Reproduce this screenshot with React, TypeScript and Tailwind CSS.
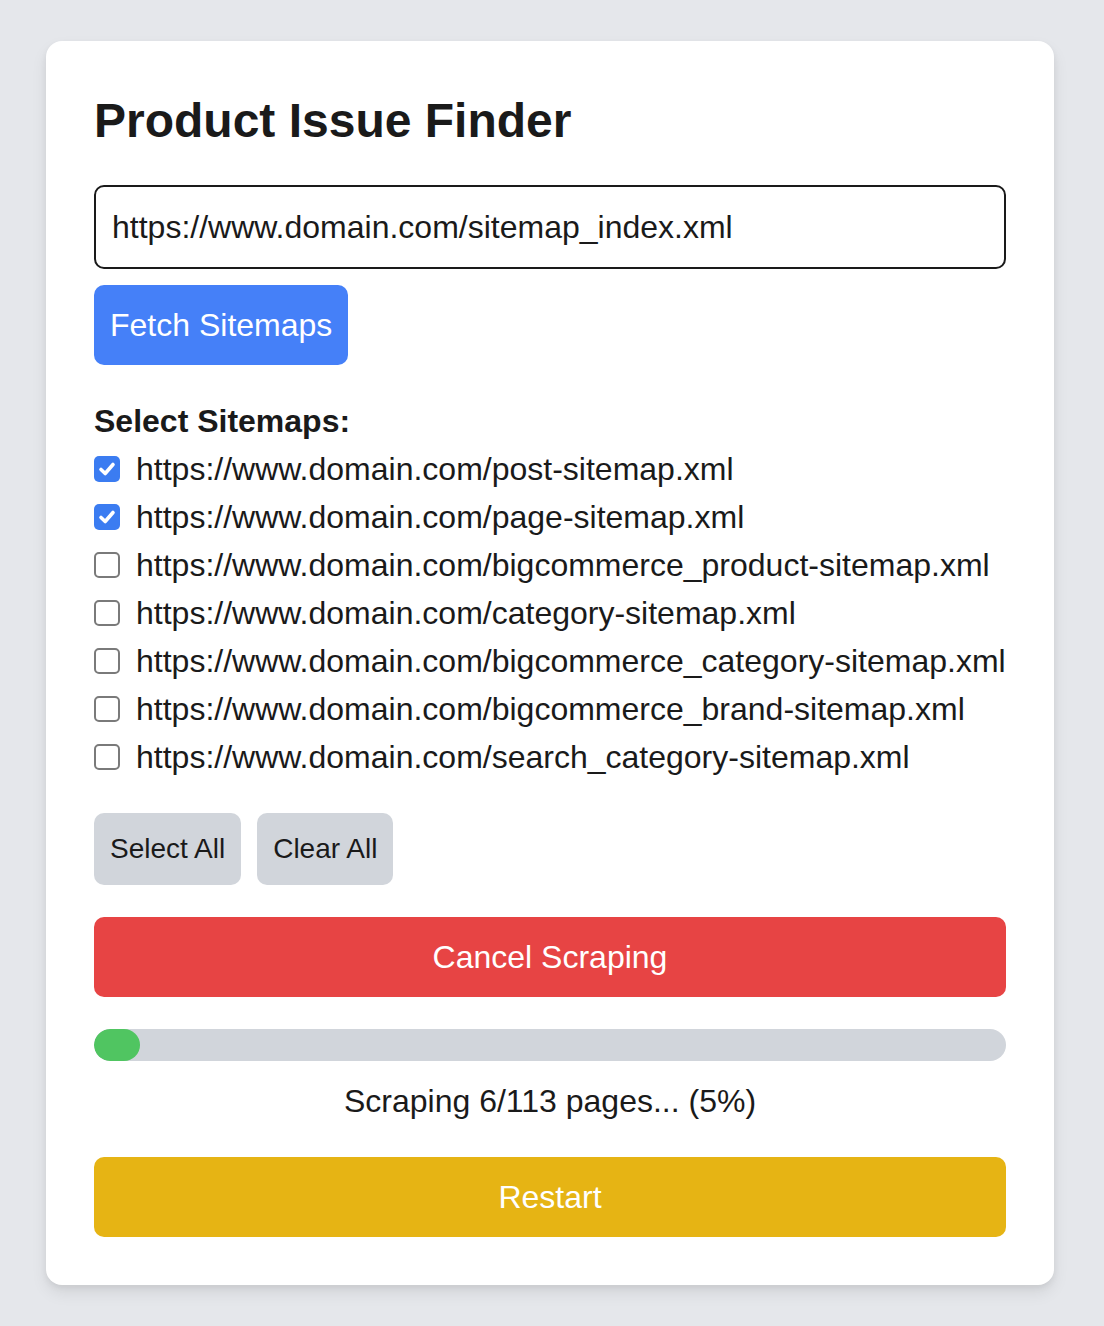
import { useState } from "react";

const sitemaps = [
  "https://www.domain.com/post-sitemap.xml",
  "https://www.domain.com/page-sitemap.xml",
  "https://www.domain.com/bigcommerce_product-sitemap.xml",
  "https://www.domain.com/category-sitemap.xml",
  "https://www.domain.com/bigcommerce_category-sitemap.xml",
  "https://www.domain.com/bigcommerce_brand-sitemap.xml",
  "https://www.domain.com/search_category-sitemap.xml",
];

const Box = ({ checked }: { checked: boolean }) =>
  checked ? (
    <span className="w-[26px] h-[26px] rounded-[5px] bg-[#3b7cf1] flex items-center justify-center shrink-0">
      <svg width="20" height="20" viewBox="0 0 20 20">
        <path d="M4 10.5 L8.2 14.5 L16 5.5" fill="none" stroke="white" strokeWidth="3.6" strokeLinecap="round" strokeLinejoin="round" />
      </svg>
    </span>
  ) : (
    <span className="w-[26px] h-[26px] rounded-[5px] border-2 border-[#7a7a7a] bg-white shrink-0"></span>
  );

const App = () => {
  const [selected, setSelected] = useState<boolean[]>([true, true, false, false, false, false, false]);
  const total = 113;
  const done = 6;
  const pct = Math.round((done / total) * 100);

  return (
    <div
      className="min-h-screen bg-[#e5e7eb] pt-[41px] pb-[41px] pl-[46px] pr-[50px] text-[#1a1a1a]"
      style={{ fontFamily: '"Liberation Sans", Arial, sans-serif' }}
    >
      <div className="bg-white rounded-[16px] p-[48px] shadow-[0_8px_16px_rgba(0,0,0,0.08),0_3px_6px_rgba(0,0,0,0.06)]">
        <h1 className="text-[48px] leading-[64px] font-bold mb-[32px]">Product Issue Finder</h1>
        <input
          type="text"
          defaultValue="https://www.domain.com/sitemap_index.xml"
          className="w-full h-[84px] border-2 border-[#1a1a1a] rounded-[10px] px-[16px] text-[32px] leading-[48px] outline-none"
        />
        <button className="mt-[16px] bg-[#4580f8] text-white text-[32px] leading-[48px] px-[16px] py-[16px] rounded-[10px]">
          Fetch Sitemaps
        </button>

        <div className="mt-[32px]">
          <h3 className="text-[32px] leading-[48px] font-bold">Select Sitemaps:</h3>
          {sitemaps.map((s, i) => (
            <label
              key={s}
              className="flex items-center h-[48px] cursor-pointer"
              onClick={() => setSelected(selected.map((v, j) => (j === i ? !v : v)))}
            >
              <Box checked={selected[i]} />
              <span className="ml-[16px] text-[32px] leading-[48px] whitespace-nowrap">{s}</span>
            </label>
          ))}
        </div>

        <div className="mt-[32px] flex gap-[16px]">
          <button
            className="bg-[#d1d5db] text-[28px] leading-[40px] px-[16px] py-[16px] rounded-[10px]"
            onClick={() => setSelected(sitemaps.map(() => true))}
          >
            Select All
          </button>
          <button
            className="bg-[#d1d5db] text-[28px] leading-[40px] px-[16px] py-[16px] rounded-[10px]"
            onClick={() => setSelected(sitemaps.map(() => false))}
          >
            Clear All
          </button>
        </div>

        <button className="mt-[32px] w-full bg-[#e74444] text-white text-[32px] leading-[48px] py-[16px] rounded-[10px]">
          Cancel Scraping
        </button>

        <div className="mt-[32px] h-[32px] w-full bg-[#d1d5db] rounded-full overflow-hidden">
          <div className="h-full bg-[#50c561] rounded-full" style={{ width: `${pct}%` }}></div>
        </div>
        <p className="mt-[16px] text-center text-[32px] leading-[48px]">
          Scraping {done}/{total} pages... ({pct}%)
        </p>

        <button className="mt-[32px] w-full bg-[#e6b414] text-white text-[32px] leading-[48px] py-[16px] rounded-[10px]">
          Restart
        </button>
      </div>
    </div>
  );
};

export default App;
